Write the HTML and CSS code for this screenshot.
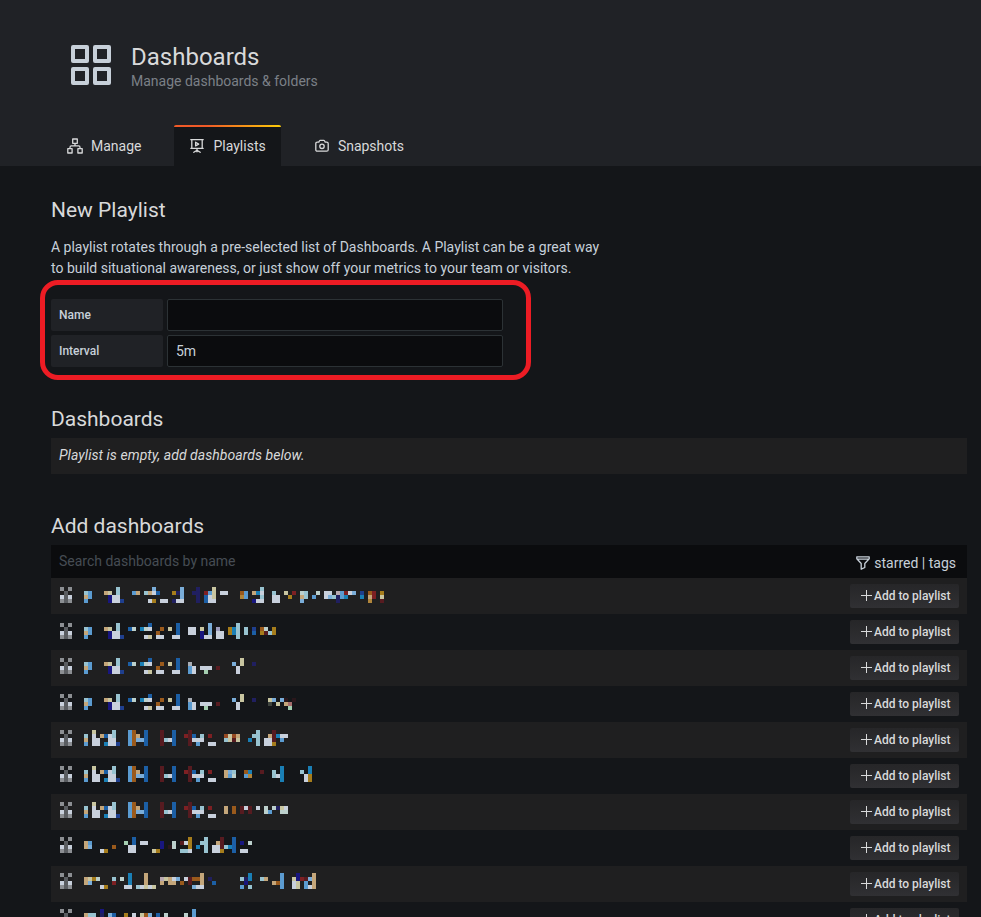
FILE: index.html
```html
<!DOCTYPE html>
<html lang="en">
<head>
<meta charset="utf-8">
<title>Dashboards - Playlists</title>
<link rel="stylesheet" href="styles.css">
</head>
<body>
<header class="page-header">
  <div class="brand">
    <svg class="brand-icon" width="40" height="40" viewBox="0 0 40 40" fill="none" stroke="#c7d0d9" stroke-width="4" stroke-linejoin="round"><path d="M2 2h14v14H2zM24 2h14v14H24zM2 24h14v14H2zM24 24h14v14H24z"/></svg>
    <div>
      <h1>Dashboards</h1>
      <div class="subtitle">Manage dashboards &amp; folders</div>
    </div>
  </div>
  <nav class="tabs">
    <a class="tab tab-manage"><svg width="16" height="16" viewBox="0 0 16 16" fill="none" stroke="currentColor" stroke-width="1.3" stroke-linejoin="round"><path d="M5.7 1h4.6v4.3H5.7zM.8 10.7h4.3V15H.8zM10.9 10.7h4.3V15h-4.3zM8 5.3v2.6M3 10.7V9.2Q3 7.9 4.3 7.9h7.4Q13 7.9 13 9.2v1.5"/></svg>Manage</a>
    <a class="tab tab-active"><svg width="16" height="16" viewBox="0 0 16 16" fill="none" stroke="currentColor" stroke-width="1.3" stroke-linecap="round" stroke-linejoin="round"><path d="M1.8 1.7h12.4M2.8 1.7v8.6M13.2 1.7v8.6M1.8 10.3h12.4M8 10.3v3.5M4.8 14.3 8 12.4l3.2 1.9M6.6 4.2v3.7l3.1-1.8z"/></svg>Playlists</a>
    <a class="tab tab-snapshots"><svg width="16" height="16" viewBox="0 0 16 16" fill="none" stroke="currentColor" stroke-width="1.3" stroke-linejoin="round"><path d="M3.3 4.1h1.5l.7-1.3q.2-.4.8-.4h3.4q.6 0 .8.4l.7 1.3h1.5q1.500 0 1.500 1.500v6.100q0 1.500-1.500 1.500H3.300q-1.500 0-1.500-1.500V5.600q0-1.500 1.500-1.500z"/><circle cx="8" cy="8.3" r="2.2"/></svg>Snapshots</a>
  </nav>
</header>
<main>
  <h3 class="title-new">New Playlist</h3>
  <p class="intro">A playlist rotates through a pre-selected list of Dashboards. A Playlist can be a great way<br>to build situational awareness, or just show off your metrics to your team or visitors.</p>
  <form class="fields">
    <label for="name">Name</label><input id="name" type="text">
    <label for="interval">Interval</label><input id="interval" type="text" value="5m">
    <div class="callout"></div>
  </form>
  <h3 class="title-dash">Dashboards</h3>
  <div class="empty"><em>Playlist is empty, add dashboards below.</em></div>
  <h3 class="title-add">Add dashboards</h3>
  <div class="search">
    <span class="placeholder">Search dashboards by name</span>
    <span class="filter"><svg width="14" height="14" viewBox="0 0 14 14" fill="none" stroke="currentColor" stroke-width="1.3" stroke-linejoin="round"><path d="M.8.8h12.4v2L8.8 7.5v4L5.2 13.2V7.5L.8 2.8zM.8 3.2h12.4"/></svg>starred | tags</span>
  </div>
  <div id="rows"></div>
</main>
<script src="script.js"></script>
</body>
</html>
```
FILE: styles.css
```css
* { box-sizing: border-box; }
body { margin: 0; height: 917px; overflow: hidden; background: #141619; color: #d8d9da; font: 14px/21px Roboto, sans-serif; }
h1, h3, p { margin: 0; font-weight: 400; }
.page-header { height: 166px; background: #202226; display: flex; flex-direction: column; justify-content: space-between; }
.brand { display: flex; gap: 20px; padding: 45px 0 0 71px; }
h1 { font-size: 24px; line-height: 24px; }
.subtitle { color: #7b8087; line-height: 21px; margin-top: 2px; }
.tabs { display: flex; height: 41px; padding-left: 51px; line-height: 42px; color: #d8d9da; }
.tab { display: flex; align-items: center; padding: 0 16px; }
.tab svg { margin-right: 8px; }
.tab-manage { width: 123px; }
.tab-active { width: 107px; padding: 0 0 0 15px; background: linear-gradient(90deg, #f05a28 30%, #fbca0a 99%) 0 0 / 100% 2px no-repeat, #141619; border-radius: 2px 2px 0 0; margin-right: 17px; }
.tab-active svg { margin-right: 8.5px; }
.tab-snapshots { letter-spacing: -.04px; }
main { padding: 30px 14px 0 51px; }
h3 { font-size: 21px; line-height: 28px; }
.intro { margin-top: 13px; color: #c7d0d9; }
.fields { position: relative; margin-top: 20px; display: grid; grid-template-columns: 112px 336px; gap: 4px; }
.fields label { height: 32px; padding-left: 8px; background: #202226; border-radius: 2px; color: #c7d0d9; font-size: 12px; font-weight: 500; line-height: 32px; }
.fields input { height: 32px; padding: 0 8px; background: #0b0c0e; border: 1px solid #2c3235; border-radius: 2px; color: #c7d0d9; font: 14px/21px Roboto, sans-serif; outline: 0; }
.callout { position: absolute; left: -11px; top: -19px; width: 491px; height: 100px; border: 5px solid #ed1c24; border-radius: 18px; pointer-events: none; }
.title-dash { margin-top: 38px; }
.empty { height: 36px; margin-top: 5px; padding: 7px 8px; background: #1f1f20; letter-spacing: .05px; }
.title-add { margin-top: 38px; }
.search { display: flex; justify-content: space-between; height: 33px; margin-top: 5px; padding: 0 11px 0 8px; background: #0b0c0e; line-height: 33px; }
.placeholder { color: #464c54; }
.filter { display: flex; align-items: center; gap: 4px; padding-top: 3px; color: #c7d0d9; }
.row { display: flex; justify-content: space-between; height: 36px; padding: 0 8px 0 9px; }
.row:nth-child(odd) { background: #1f1f20; }
.add { display: flex; align-items: center; width: 109px; height: 24px; margin-top: 6px; padding-left: 11px; gap: 2px; border-radius: 2px; background: linear-gradient(#262628, #303033); font-size: 12px; font-weight: 500; line-height: 24px; white-space: nowrap; color: #d8d9da; }
.add svg { margin-bottom: 1px; }
```
FILE: script.js
```js
// Each dashboard name is obscured by a mosaic of 4px cells.
// A token reads colour key, column, ".", first row, optional "-" last row.
const colors = {
  w: '#c8d0dc', s: '#5b9bd0', l: '#7aadd9', a: '#98c3d0', t: '#c4a67a', k: '#c8c5a0',
  n: '#18167f', m: '#201f60', b: '#1c5fa5', c: '#1a7fb5', g: '#a67d1c', o: '#9a5a1c',
  r: '#7d2023', d: '#571b20', B: '#1f3f8e', h: '#bcd0cc', u: '#b0853b', p: '#b8a8b0',
  e: '#8c8f93', f: '#5a5d61', v: '#9b9bbc', q: '#a4ceb0', z: '#40453f', y: '#a66d6d',
  x: '#974a22', i: '#2a171b', j: '#a8adb5'
};
const icon = 'e0.0 e2.0 f1.1 w0.2 f1.2 w2.2 e0.3 f1.3 e2.3 ';
const blue = icon + 'a6.1 t6.2 s6.3 s7.1-2 t11.1 k12.1 n12.2-3 w13.2-3 a14.0-1 w14.2-3 B15.3 ';
const mid = blue + 'b17.1 h18.1 c20.1 h21.1 w22.1 b22.0 w21.3 k22.3 o24.2 w24.3 o25.1 w25.3 k27.1 w28.3 b29.0-2 w29.3 ';
const hay = mid + 'j32.1 s32.2-3 w33.2-3 w35.2 w36.2 w37.2 q36.3 d39.2 l43.1 w44.2-3 k45.0-1 m48.1 ';
const dark = icon + 'a6.1 t6.2 s6.3 k8.0 w8.1-3 w9.2-3 t10.1 b11.1 c11.3 w12.1-3 a13.0-1 w13.2-3 B14.3 s17.0-3 o18.0-3 t19.1 l19.2 l20.2 b21.0-3 d25.0-3 a26.2 w27.2 b28.0-3 r31.1 d32.0-3 b33.1 w33.2 w34.2 s34.3 a35.1 w35.2 r37.1 w37.3 w38.3 ';
const entries = [
  [9, blue + 's18.1 t19.1 a21.1 t22.1 w22.3 l23.0 w23.1 g23.3 b24.1 w25.3 w26.3 g28.1 m28.3 m29.1 w29.3 l30.0-2 w30.3 m33.1 m34.0-3 r36.1 b36.2-3 s37.1 w37.2-3 k38.0-2 w38.3 w40.1 w41.1 o45.1 u45.2 s46.1-2 t48.1 n48.3 c49.1 w49.3 a50.0 w50.1 a50.2 w50.3 a53.1 w53.2-3 w54.2-3 k56.1 g57.2 r58.1 h60.1 t60.2 l60.3 a61.1-2 s63.2 h64.1 w66.1-2 w67.1 l67.2 a68.2 p69.1 m69.2-3 s70.1-2 r71.1 c71.2 w72.1 l73.1 B75.1 c75.2 o77.1 t77.2 u77.3 r78.1-2 g80.1 k80.2 d80.3'],
  [9, mid + 'w32.1-2 w33.1-2 k35.1 n35.2-3 w36.3 l37.0-2 w37.3 v39.1 w39.2-3 w40.2-3 g42.1-2 c43.1-2 a44.0-3 a46.1-2 B48.1 b48.2 o50.1 g50.2 h51.1 d51.2 a52.2 g53.1-2'],
  [8, hay],
  [8, hay + 'k52.1 z52.2 l53.1 k54.2 l55.1 i56.1 t56.2 y57.2 q57.3 i58.1'],
  [8, dark + 'x41.1 a41.2 k42.1-2 x43.1 d43.2 t44.1 k44.2 c47.2 a48.1 a49.0-3 w51.2-3 t52.1 w52.2-3 d53.0-2 g53.3 c54.1 w55.1 s55.2 w56.1'],
  [8, dark + 't41.1-2 l42.1 s42.2 a43.1 h43.2 o46.1 s46.2 c47.1 u47.2 d50.1 a53.1-2 w54.2 c55.0-3 a60.1 w61.2-3 c62.0-1 g62.2-3'],
  [8, dark + 't41.1-2 o43.1-2 d45.1-2 w46.1 d47.1-2 w49.1 h51.1-2 s52.2 h53.1 m54.1 k55.1 h55.2 w56.1 h56.2'],
  [7, icon + 't6.1-2 s7.1 l7.2 w10.3 g11.3 o13.2 q16.1 w17.2-3 b18.0-1 w18.2-3 w20.1 w21.1 k23.3 g24.3 n25.1-2 i27.2 h28.1-2 d30.1 a30.3 w31.1 a31.3 g32.0-2 w32.3 c34.2 a35.1 a36.0-3 w38.2-3 t39.1 w39.2-3 d40.0-2 g40.3 a41.2 c42.2 b43.0-3 n45.1 w45.3 w46.3 h47.1'],
  [7, icon + 't6.1-2 k7.1 l7.2 g8.1 h9.1 w10.3 g11.3 a13.1 r13.2 h15.1 w16.3 w17.3 c17.0-2 a19.3 w20.3 t21.0-2 k21.3 w22.3 k23.3 p25.1 t25.2 k26.1 t27.1-2 w28.1 t28.2 l29.1 o30.2 w31.1 d32.1-2 o33.1 l33.3 o34.1 w34.3 t35.0-2 w35.3 m37.1 b38.2 a45.1 s45.3 m46.1 n46.2 c47.0-1 a47.3 a50.1 t51.1 t53.2 o54.2 s55.0-3 k58.1 w58.2-3 n59.0-1 k59.2-3 r60.1 d61.1 s61.2-3 l62.1 w62.3 t63.0-3'],
  [7, icon + 'n10.0 s33.0-1 t6.1 a7.1 a8.1 m10.1 l12.1 b13.1 g16.1 w18.1 k20.1 o21.1 l22.1 b24.1 h26.1 h31.1']
];
const mosaic = (tokens, top) => {
  const cells = tokens.trim().split(/\s+/).map(t => {
    const [, key, col, from, to] = t.match(/^(\w)(\d+)\.(\d)(?:-(\d))?$/);
    const height = ((to ?? from) - from + 1) * 4;
    return `<rect x="${col * 4}" y="${top + from * 4}" width="4" height="${height}" fill="${colors[key]}"/>`;
  });
  return `<svg width="328" height="36" shape-rendering="crispEdges">${cells.join('')}</svg>`;
};
document.getElementById('rows').innerHTML = entries.map(([top, tokens]) =>
  `<div class="row">${mosaic(tokens, top)}<div class="add"><svg width="11" height="11" viewBox="0 0 11 11" stroke="currentColor"><path d="M5.5 0v11M0 5.5h11"/></svg>Add to playlist</div></div>`
).join('');
```
